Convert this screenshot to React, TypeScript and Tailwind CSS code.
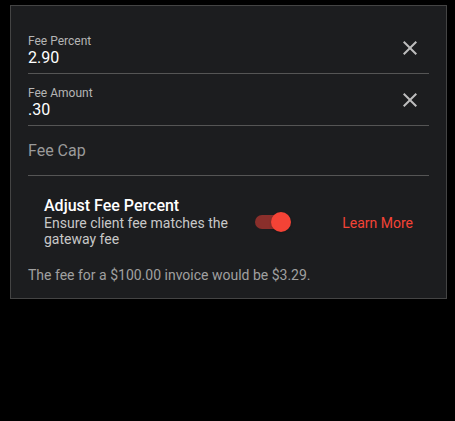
import React from 'react';

const font = { fontFamily: 'Roboto, "Liberation Sans", sans-serif' };

function CloseIcon() {
  return (
    <svg width="24" height="24" viewBox="0 0 24 24" fill="#bdbdbd" aria-hidden>
      <path d="M19 6.41 17.59 5 12 10.59 6.41 5 5 6.41 10.59 12 5 17.59 6.41 19 12 13.41 17.59 19 19 17.59 13.41 12z" />
    </svg>
  );
}

function FeeField({ label, value }: { label: string; value: string }) {
  return (
    <div className="flex items-center border-b border-[#555] pt-3 pb-[6px]">
      <div className="flex-1">
        <div className="text-[12px] leading-[14px] text-[#b5b5b5]">{label}</div>
        <div className="text-[16px] leading-[19px] text-white">{value}</div>
      </div>
      <button className="mr-[7px] mb-[5px]">
        <CloseIcon />
      </button>
    </div>
  );
}

export default function App() {
  return (
    <div className="h-[421px] w-full bg-black pt-[5px] pl-[10px]" style={font}>
      <div className="w-[437px] h-[294px] border border-[#444] bg-[#1c1d1f] px-[17px] pt-4">
        <FeeField label="Fee Percent" value="2.90" />
        <FeeField label="Fee Amount" value=".30" />

        {/* empty field, placeholder only */}
        <div className="border-b border-[#555] pt-[15px] pb-[15px]">
          <div className="text-[16px] leading-[19px] text-[#9a9a9a]">Fee Cap</div>
        </div>

        <div className="flex items-center pl-4 pr-4 mt-5">
          <div className="w-[195px]">
            <div className="text-[16px] leading-[19px] font-medium text-white">Adjust Fee Percent</div>
            <div className="text-[14px] leading-[16px] text-[#c8c8c8]">
              Ensure client fee matches the gateway fee
            </div>
          </div>
          <div className="relative ml-4 w-9 h-5 flex items-center">
            <div className="h-[14px] w-[32px] rounded-full bg-[#8a2f2b]" />
            <div className="absolute right-0 top-0 h-5 w-5 rounded-full bg-[#f44336] shadow" />
          </div>
          <a className="ml-auto mt-[2px] text-[14px] leading-[16px] text-[#f44336]">Learn More</a>
        </div>

        <p className="mt-[18px] text-[14px] leading-[20px] text-[#a0a0a0]">
          The fee for a $100.00 invoice would be $3.29.
        </p>
      </div>
    </div>
  );
}
